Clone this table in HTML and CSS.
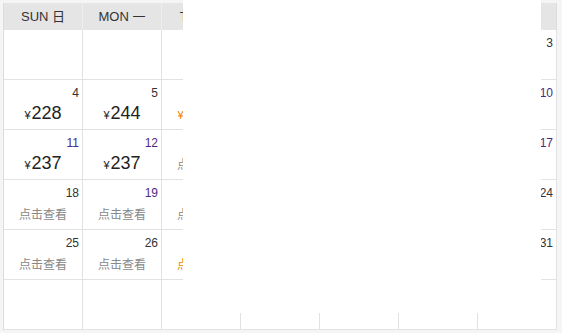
FILE: index.html
```html
<!DOCTYPE html>
<html lang="zh">
<head>
<meta charset="utf-8">
<title>Calendar</title>
<link rel="stylesheet" href="styles.css">
</head>
<body>
<div class="wrap">
  <div class="cal">
    <div class="hd">SUN 日</div>
    <div class="hd">MON 一</div>
    <div class="hd">TUE 二</div>
    <div class="hd">WED 三</div>
    <div class="hd">THU 四</div>
    <div class="hd">FRI 五</div>
    <div class="hd">SAT 六</div>

    <div class="cell"></div>
    <div class="cell"></div>
    <div class="cell"></div>
    <div class="cell"></div>
    <div class="cell"><a class="num">1</a></div>
    <div class="cell"><a class="num">2</a></div>
    <div class="cell"><a class="num">3</a></div>

    <div class="cell"><a class="num">4</a><div class="price"><span class="yen">¥</span>228</div></div>
    <div class="cell"><a class="num">5</a><div class="price"><span class="yen">¥</span>244</div></div>
    <div class="cell"><a class="num">6</a><div class="price low"><span class="yen">¥</span>1999</div></div>
    <div class="cell"><a class="num">7</a><div class="price"><span class="yen">¥</span>237</div></div>
    <div class="cell"><a class="num">8</a><div class="price"><span class="yen">¥</span>237</div></div>
    <div class="cell"><a class="num">9</a><div class="price"><span class="yen">¥</span>244</div></div>
    <div class="cell"><a class="num v">10</a></div>

    <div class="cell"><a class="num v">11</a><div class="price"><span class="yen">¥</span>237</div></div>
    <div class="cell"><a class="num v">12</a><div class="price"><span class="yen">¥</span>237</div></div>
    <div class="cell"><a class="num v">13</a><div class="view">点击查看</div></div>
    <div class="cell"><a class="num v">14</a><div class="view">点击查看</div></div>
    <div class="cell"><a class="num v">15</a><div class="view">点击查看</div></div>
    <div class="cell"><a class="num v">16</a><div class="view">点击查看</div></div>
    <div class="cell"><a class="num v">17</a></div>

    <div class="cell"><a class="num">18</a><div class="view">点击查看</div></div>
    <div class="cell"><a class="num v">19</a><div class="view">点击查看</div></div>
    <div class="cell"><a class="num">20</a><div class="view">点击查看</div></div>
    <div class="cell"><a class="num">21</a><div class="view">点击查看</div></div>
    <div class="cell"><a class="num">22</a><div class="view">点击查看</div></div>
    <div class="cell"><a class="num">23</a><div class="view">点击查看</div></div>
    <div class="cell"><a class="num">24</a></div>

    <div class="cell"><a class="num">25</a><div class="view">点击查看</div></div>
    <div class="cell"><a class="num">26</a><div class="view">点击查看</div></div>
    <div class="cell"><a class="num">27</a><div class="view low">点击查看</div></div>
    <div class="cell"><a class="num">28</a><div class="view">点击查看</div></div>
    <div class="cell"><a class="num">29</a><div class="view">点击查看</div></div>
    <div class="cell"><a class="num">30</a><div class="view">点击查看</div></div>
    <div class="cell"><a class="num">31</a></div>

    <div class="cell"></div>
    <div class="cell"></div>
    <div class="cell"></div>
    <div class="cell"></div>
    <div class="cell"></div>
    <div class="cell"></div>
    <div class="cell"></div>
  </div>
  <div class="overlay"></div>
</div>
</body>
</html>
```
FILE: styles.css
```css
html, body {
  margin: 0;
  padding: 0;
  background: #f5f5f5;
}
body {
  font-family: "Liberation Sans", "Noto Sans CJK SC", Arial, sans-serif;
  color: #333;
}
.wrap {
  padding: 3px 0 0 3px;
}
.cal {
  display: grid;
  grid-template-columns: repeat(7, 79px);
  width: max-content;
  border-left: 1px solid #dcdcdc;
  background: #fff;
}
.hd {
  height: 27px;
  line-height: 27px;
  background: #e5e5e5;
  border-right: 1px solid #ededed;
  text-align: center;
  font-size: 13px;
  color: #333;
}
.hd:nth-child(7) {
  border-right-color: #dcdcdc;
}
.cell {
  border-right: 1px solid #e2e2e2;
  border-bottom: 1px solid #e2e2e2;
  padding-top: 6px;
  height: 43px;
  display: flex;
  flex-direction: column;
}
.num {
  align-self: flex-end;
  padding-right: 3px;
  font-size: 12px;
  line-height: 14px;
  color: #333;
}
.num.v {
  color: #4e2a80;
}
.price {
  margin-top: 3px;
  text-align: center;
  font-size: 18px;
  line-height: 20px;
  color: #222;
}
.price.low {
  color: #f08300;
}
.yen {
  font-size: 11px;
  margin-right: 1px;
}
.view {
  margin-top: 6px;
  text-align: center;
  font-size: 12px;
  line-height: 16px;
  color: #888;
  font-family: "Noto Sans CJK SC", sans-serif;
}
.view.low {
  color: #f08300;
}
.overlay {
  position: absolute;
  left: 183px;
  top: 0;
  width: 358px;
  height: 313px;
  background: #fff;
}
```
